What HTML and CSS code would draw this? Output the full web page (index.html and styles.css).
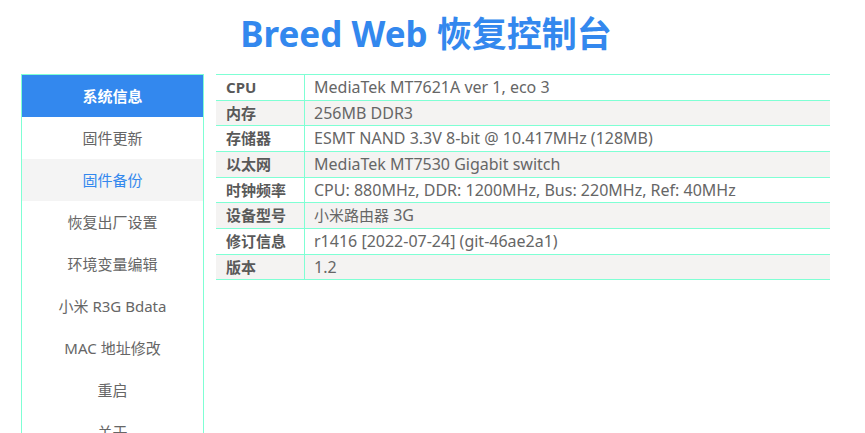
FILE: index.html
```html
<!DOCTYPE html>
<html lang="zh-CN">
<head>
<meta charset="utf-8">
<title>Breed Web 恢复控制台</title>
<link rel="stylesheet" href="styles.css">
</head>
<body>
<h1 class="title">Breed Web 恢复控制台</h1>
<div class="main">
  <ul class="nav">
    <li class="nav-item active">系统信息</li>
    <li class="nav-item">固件更新</li>
    <li class="nav-item hover">固件备份</li>
    <li class="nav-item">恢复出厂设置</li>
    <li class="nav-item">环境变量编辑</li>
    <li class="nav-item">小米 R3G Bdata</li>
    <li class="nav-item">MAC 地址修改</li>
    <li class="nav-item">重启</li>
    <li class="nav-item">关于</li>
  </ul>
  <div class="info">
    <div class="row"><div class="label">CPU</div><div class="value">MediaTek MT7621A ver 1, eco 3</div></div>
    <div class="row alt"><div class="label">内存</div><div class="value">256MB DDR3</div></div>
    <div class="row"><div class="label">存储器</div><div class="value">ESMT NAND 3.3V 8-bit @ 10.417MHz (128MB)</div></div>
    <div class="row alt"><div class="label">以太网</div><div class="value">MediaTek MT7530 Gigabit switch</div></div>
    <div class="row"><div class="label">时钟频率</div><div class="value">CPU: 880MHz, DDR: 1200MHz, Bus: 220MHz, Ref: 40MHz</div></div>
    <div class="row alt"><div class="label">设备型号</div><div class="value"><span class="cjk">小米路由器</span> 3G</div></div>
    <div class="row"><div class="label">修订信息</div><div class="value">r1416 [2022-07-24] (git-46ae2a1)</div></div>
    <div class="row alt"><div class="label">版本</div><div class="value">1.2</div></div>
  </div>
</div>
</body>
</html>
```

FILE: styles.css
```css
html, body {
  margin: 0;
  padding: 0;
  background: #ffffff;
  overflow: hidden;
}
body {
  font-family: "Noto Sans", "Noto Sans CJK SC", sans-serif;
  color: #666666;
  width: 865px;
  height: 433px;
}
.title {
  margin: 0;
  width: 810px;
  margin-left: 21px;
  height: 74px;
  line-height: 68px;
  text-align: center;
  font-size: 35px;
  font-weight: bold;
  color: #3388ee;
  font-family: "Noto Sans", "Noto Sans CJK SC", sans-serif;
}
.main {
  display: flex;
  align-items: flex-start;
  gap: 12px;
  margin-left: 21px;
}
.nav {
  list-style: none;
  margin: 0;
  padding: 0;
  width: 181px;
  border: 1px solid #7fffd4;
  border-bottom: none;
  flex: none;
  height: 400px;
}
.nav-item {
  height: 42px;
  line-height: 42px;
  text-align: center;
  font-size: 15px;
  color: #666666;
}
.nav-item.active {
  background: #3388ee;
  color: #ffffff;
  font-weight: bold;
}
.nav-item.hover {
  background: #f4f4f4;
  color: #3388ee;
}
.info {
  width: 614px;
  border-top: 1px solid #7fffd4;
  flex: none;
}
.row {
  display: grid;
  grid-template-columns: 89px 1fr;
  height: 25.66px;
  box-sizing: border-box;
  border-bottom: 1px solid #7fffd4;
  font-size: 15px;
}
.row.alt {
  background: #f4f3f2;
}
.label {
  border-right: 1px solid #7fffd4;
  padding-left: 10px;
  font-weight: bold;
  color: #595959;
  line-height: 24px;
}
.value {
  padding-left: 9px;
  color: #666666;
  font-size: 16px;
  line-height: 24px;
  white-space: nowrap;
}
.cjk {
  font-size: 15px;
}
```
